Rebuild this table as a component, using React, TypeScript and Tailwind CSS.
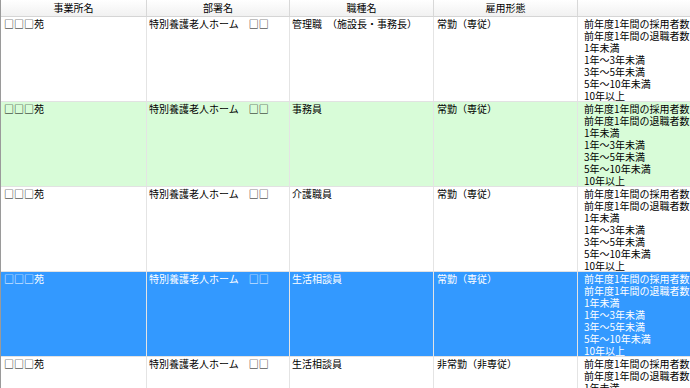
import React from "react";

type Row = {
  office: string;
  dept: string;
  job: string;
  type: string;
  tone: "plain" | "green" | "selected";
};

const ITEMS = [
  "前年度1年間の採用者数",
  "前年度1年間の退職者数",
  "1年未満",
  "1年～3年未満",
  "3年～5年未満",
  "5年～10年未満",
  "10年以上",
];

const ROWS: Row[] = [
  { office: "□□□苑", dept: "特別養護老人ホーム　□□", job: "管理職　（施設長・事務長）", type: "常勤（専従）", tone: "plain" },
  { office: "□□□苑", dept: "特別養護老人ホーム　□□", job: "事務員", type: "常勤（専従）", tone: "green" },
  { office: "□□□苑", dept: "特別養護老人ホーム　□□", job: "介護職員", type: "常勤（専従）", tone: "plain" },
  { office: "□□□苑", dept: "特別養護老人ホーム　□□", job: "生活相談員", type: "常勤（専従）", tone: "selected" },
  { office: "□□□苑", dept: "特別養護老人ホーム　□□", job: "生活相談員", type: "非常勤（非専従）", tone: "plain" },
];

const toneClass = {
  plain: "bg-white text-black",
  green: "bg-[#d8fcd8] text-black",
  selected: "bg-[#3399ff] text-white",
};

function GridRow({ row }: { row: Row }) {
  return (
    <div className={`flex h-[85px] shrink-0 border-b border-[#e2e2e2] ${toneClass[row.tone]}`}>
      <div className="w-[146px] shrink-0 border-r border-[#e4e4e4] pl-[3px] pt-[1px]">{row.office}</div>
      <div className="w-[143px] shrink-0 border-r border-[#e4e4e4] pl-[2px] pt-[1px] whitespace-nowrap">{row.dept}</div>
      <div className="w-[144px] shrink-0 border-r border-[#e4e4e4] pl-[2px] pt-[1px] whitespace-nowrap">{row.job}</div>
      <div className="w-[144px] shrink-0 border-r border-[#e4e4e4] pl-[3px] pt-[1px] whitespace-nowrap">{row.type}</div>
      <div className="flex-1 pl-[6px] pt-[1px] whitespace-nowrap">
        {ITEMS.map((t) => (
          <div key={t}>{t}</div>
        ))}
      </div>
    </div>
  );
}

export default function App() {
  return (
    <div className="flex h-[388px] w-[690px] flex-col overflow-hidden border-l border-[#9a9a9a] bg-white text-[10px] leading-[12px] font-['Noto_Sans_CJK_JP','Noto_Sans_CJK_SC',sans-serif]">
      <div className="flex h-[17px] shrink-0 border-b border-[#d5d5d5] bg-gradient-to-b from-white to-[#f1f1f1] leading-[16px]">
        <div className="w-[146px] shrink-0 border-r border-[#d8d8d8] text-center">事業所名</div>
        <div className="w-[143px] shrink-0 border-r border-[#d8d8d8] text-center">部署名</div>
        <div className="w-[144px] shrink-0 border-r border-[#d8d8d8] text-center">職種名</div>
        <div className="w-[144px] shrink-0 border-r border-[#d8d8d8] text-center">雇用形態</div>
        <div className="flex-1" />
      </div>
      {ROWS.map((r, i) => (
        <GridRow key={i} row={r} />
      ))}
    </div>
  );
}
